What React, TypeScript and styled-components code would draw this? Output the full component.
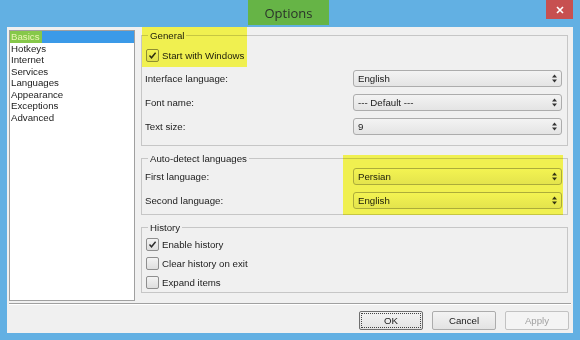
import React from "react";
import styled, { createGlobalStyle } from "styled-components";

const GlobalStyle = createGlobalStyle`
  html, body { margin: 0; padding: 0; width: 580px; height: 340px; overflow: hidden; background: #62b0e3; }
  #root { width: 580px; height: 340px; }
  * { box-sizing: border-box; }
`;

const Window = styled.div`
  width: 580px;
  height: 340px;
  display: flex;
  flex-direction: column;
  background: #62b0e3;
  font-family: "Liberation Sans", Arial, sans-serif;
  font-size: 9.7px;
  color: #1b1b1b;
`;

const TitleBar = styled.div`
  height: 27px;
  flex-shrink: 0;
  display: grid;
  grid-template-columns: 1fr auto 1fr;
  align-items: start;
  padding: 0 7px 0 4px;
`;

const Title = styled.div`
  grid-column: 2;
  width: 81px;
  height: 25px;
  background: #66b446;
  display: flex;
  align-items: center;
  justify-content: center;
  font-family: "Open Sans", "Noto Sans", sans-serif;
  font-size: 13px;
  color: #2a322a;
`;

const CloseButton = styled.div`
  grid-column: 3;
  justify-self: end;
  width: 27px;
  height: 19px;
  background: #c75050;
  display: flex;
  align-items: center;
  justify-content: center;
`;

const Client = styled.div`
  flex: 1;
  margin: 0 7px 7px;
  background: #f0f0f0;
  display: flex;
  flex-direction: column;
`;

const Main = styled.div`
  display: flex;
  align-items: flex-start;
  gap: 6px;
  padding: 2px 5px 0 2px;
`;

const ListBox = styled.div`
  flex-shrink: 0;
  margin-top: 1px;
  width: 126px;
  height: 271px;
  background: #fff;
  border: 1px solid #a0a0a0;
`;

const ListItem = styled.div<{ $selected?: boolean }>`
  height: 11.5px;
  line-height: 11.5px;
  padding-left: 1px;
  white-space: nowrap;
  background: ${(p) => (p.$selected ? "#3b9ae8" : "transparent")};
  color: ${(p) => (p.$selected ? "#fff" : "#1b1b1b")};
`;

const ListMark = styled.span`
  display: inline-block;
  margin-left: -1px;
  padding: 0 2px 0 1px;
  background: #86c84a;
  color: #eaf6b4;
`;

const Column = styled.div`
  position: relative;
  flex: 1;
  display: flex;
  flex-direction: column;
  gap: 6px;
`;

const Group = styled.fieldset<{ $pt: number; $pb: number }>`
  margin: 0;
  min-width: 0;
  padding: ${(p) => p.$pt}px 5px ${(p) => p.$pb}px 3px;
  border: 1px solid #c6c6c6;
`;

const Legend = styled.legend`
  margin-left: 3px;
  padding: 0 2px;
  height: 13px;
  line-height: 13px;
  color: #1b1b1b;
`;

const Stack = styled.div<{ $gap: number }>`
  display: flex;
  flex-direction: column;
  gap: ${(p) => p.$gap}px;
`;

const FieldRow = styled.div`
  display: flex;
  align-items: center;
  justify-content: space-between;
  height: 17px;
`;

const Select = styled.div`
  width: 209px;
  height: 17px;
  border: 1px solid #acacac;
  border-radius: 3px;
  background: linear-gradient(#f3f3f3, #e4e4e4);
  display: flex;
  align-items: center;
  justify-content: space-between;
  padding: 0 4px;
`;

const CheckRow = styled.div<{ $h: number }>`
  display: flex;
  align-items: center;
  gap: 3px;
  height: ${(p) => p.$h}px;
  padding-left: 1px;
`;

const Box = styled.span`
  width: 13px;
  height: 13px;
  border: 1px solid #8e8e8e;
  border-radius: 2px;
  background: linear-gradient(#f3f3f3, #dedede);
  display: flex;
  align-items: center;
  justify-content: center;
`;

const Highlight = styled.div<{ $x: number; $y: number; $w: number; $h: number }>`
  position: absolute;
  left: ${(p) => p.$x}px;
  top: ${(p) => p.$y}px;
  width: ${(p) => p.$w}px;
  height: ${(p) => p.$h}px;
  background: #ffff55;
  mix-blend-mode: multiply;
  pointer-events: none;
`;

const Separator = styled.div`
  margin: 2px 2px 0;
  border-top: 1px solid #a0a0a0;
  border-bottom: 1px solid #fff;
`;

const ButtonRow = styled.div`
  display: flex;
  justify-content: flex-end;
  gap: 9px;
  padding: 6px 4px 0 0;
`;

const Button = styled.button<{ $variant?: "default" | "disabled" }>`
  width: 64px;
  height: 19px;
  padding: 0;
  font: inherit;
  border-radius: 2px;
  border: 1px solid
    ${(p) => (p.$variant === "default" ? "#6f6f6f" : p.$variant === "disabled" ? "#c2c2c2" : "#acacac")};
  background: ${(p) =>
    p.$variant === "disabled" ? "#f4f4f4" : "linear-gradient(#f3f3f3, #e3e3e3)"};
  color: ${(p) => (p.$variant === "disabled" ? "#a2a2a2" : "#1b1b1b")};
  outline: ${(p) => (p.$variant === "default" ? "1px dotted #444" : "none")};
  outline-offset: -3px;
`;

const Check = () => (
  <svg width="9" height="9" viewBox="0 0 9 9">
    <polyline points="1.5,4.5 3.5,6.8 7.6,1.8" fill="none" stroke="#2b2b2b" strokeWidth="1.4" />
  </svg>
);

const Arrows = () => (
  <svg width="5" height="9" viewBox="0 0 5 9">
    <polygon points="2.5,0.5 5,3.5 0,3.5" fill="#333" />
    <polygon points="0,5.5 5,5.5 2.5,8.5" fill="#333" />
  </svg>
);

const CheckItem = ({ label, checked, h = 19 }: { label: string; checked?: boolean; h?: number }) => (
  <CheckRow $h={h}>
    <Box>{checked && <Check />}</Box>
    <span>{label}</span>
  </CheckRow>
);

const Field = ({ label, value }: { label: string; value: string }) => (
  <FieldRow>
    <span>{label}</span>
    <Select>
      <span>{value}</span>
      <Arrows />
    </Select>
  </FieldRow>
);

const pages = ["Basics", "Hotkeys", "Internet", "Services", "Languages", "Appearance", "Exceptions", "Advanced"];

export default function App() {
  return (
    <>
      <GlobalStyle />
      <Window>
        <TitleBar>
          <Title>Options</Title>
          <CloseButton>
            <svg width="8" height="8" viewBox="0 0 8 8">
              <path d="M1 1L7 7M7 1L1 7" stroke="#fff" strokeWidth="1.6" />
            </svg>
          </CloseButton>
        </TitleBar>
        <Client>
          <Main>
            <ListBox>
              {pages.map((p, i) =>
                i === 0 ? (
                  <ListItem key={p} $selected>
                    <ListMark>{p}</ListMark>
                  </ListItem>
                ) : (
                  <ListItem key={p}>{p}</ListItem>
                )
              )}
            </ListBox>
            <Column>
              <Group $pt={6} $pb={10}>
                <Legend>General</Legend>
                <Stack $gap={7}>
                  <CheckItem label="Start with Windows" checked h={15} />
                  <Field label="Interface language:" value="English" />
                  <Field label="Font name:" value="--- Default ---" />
                  <Field label="Text size:" value="9" />
                </Stack>
              </Group>
              <Group $pt={3} $pb={5}>
                <Legend>Auto-detect languages</Legend>
                <Stack $gap={7}>
                  <Field label="First language:" value="Persian" />
                  <Field label="Second language:" value="English" />
                </Stack>
              </Group>
              <Group $pt={1} $pb={0}>
                <Legend>History</Legend>
                <Stack $gap={0}>
                  <CheckItem label="Enable history" checked />
                  <CheckItem label="Clear history on exit" />
                  <CheckItem label="Expand items" />
                </Stack>
              </Group>
              <Highlight $x={1} $y={-2} $w={105} $h={40} />
              <Highlight $x={202} $y={126} $w={220} $h={60} />
            </Column>
          </Main>
          <Separator />
          <ButtonRow>
            <Button $variant="default">OK</Button>
            <Button>Cancel</Button>
            <Button $variant="disabled">Apply</Button>
          </ButtonRow>
        </Client>
      </Window>
    </>
  );
}
